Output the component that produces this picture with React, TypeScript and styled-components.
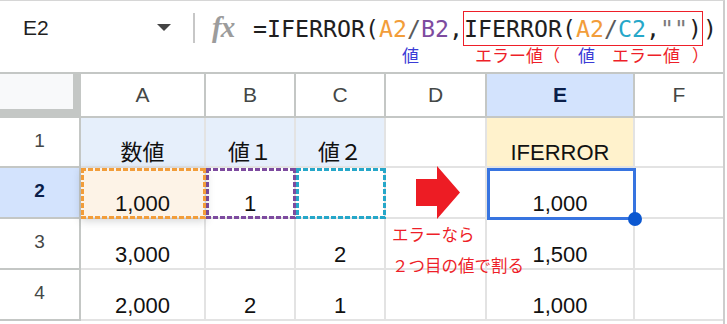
import React from "react";
import styled, { createGlobalStyle } from "styled-components";

const GlobalStyle = createGlobalStyle`
  html, body {
    margin: 0;
    padding: 0;
    background: #fff;
  }
  body {
    font-family: "Liberation Sans", "Noto Sans CJK JP", sans-serif;
  }
`;

const C = {
  ink: "#1f1f1f",
  orange: "#f29d3a",
  purple: "#7d4b9f",
  cyan: "#26a7c9",
  op: "#5a5a5a",
  quote: "#7a7a7a",
  red: "#ee1f29",
  blue: "#3b3bd6",
  head: "#c4c7c5",
  grid: "rgba(0, 0, 0, 0.11)",
  select: "#3774e0",
};

type Value = React.ReactNode;

const rows: { n: number; cells: Value[] }[] = [
  { n: 1, cells: ["数値", "値１", "値２", "", "IFERROR", ""] },
  { n: 2, cells: ["1,000", "1", "", "arrow", "1,000", ""] },
  { n: 3, cells: ["3,000", "", "2", "", "1,500", ""] },
  { n: 4, cells: ["2,000", "2", "1", "", "1,000", ""] },
];

const columns = ["A", "B", "C", "D", "E", "F"];

const cellBg: Record<string, string> = {
  A1: "#e6effb",
  B1: "#e6effb",
  C1: "#e6effb",
  E1: "#fff2cc",
  A2: "#fdf3e7",
};

const refs: Record<string, string> = {
  A2: C.orange,
  B2: C.purple,
  C2: C.cyan,
};

export default function App() {
  return (
    <>
      <GlobalStyle />
      <Frame>
        <FormulaBar>
          <TopRow>
            <NameBox>
              <span>E2</span>
              <svg width="14" height="7" viewBox="0 0 14 7">
                <polygon points="0,0 14,0 7,7" fill="#444" />
              </svg>
            </NameBox>
            <Divider />
            <Fx>fx</Fx>
            <Formula>
              <Tok $c={C.ink}>=IFERROR(</Tok>
              <Tok $c={C.orange}>A2</Tok>
              <Tok $c={C.op}>/</Tok>
              <Tok $c={C.purple}>B2</Tok>
              <Tok $c={C.ink}>,</Tok>
              <Boxed>
                <Tok $c={C.ink}>IFERROR(</Tok>
                <Tok $c={C.orange}>A2</Tok>
                <Tok $c={C.op}>/</Tok>
                <Tok $c={C.cyan}>C2</Tok>
                <Tok $c={C.ink}>,</Tok>
                <Tok $c={C.quote}>""</Tok>
                <Tok $c={C.ink}>)</Tok>
              </Boxed>
              <Tok $c={C.ink}>)</Tok>
            </Formula>
          </TopRow>
          <Legend>
            <Mark $c={C.blue}>値</Mark>
            <Mark $c={C.red} $gap={56}>エラー値（</Mark>
            <Mark $c={C.blue} $gap={18}>値</Mark>
            <Mark $c={C.red} $gap={17}>エラー値</Mark>
            <Mark $c={C.red} $gap={12}>）</Mark>
          </Legend>
        </FormulaBar>

        <Sheet>
          <Corner />
          {columns.map((c) => (
            <ColHead key={c} $active={c === "E"} $last={c === "F"}>
              {c}
            </ColHead>
          ))}
          {rows.map((r) => (
            <React.Fragment key={r.n}>
              <RowHead $active={r.n === 2}>{r.n}</RowHead>
              {r.cells.map((v, i) => {
                const id = columns[i] + r.n;
                return (
                  <Cell
                    key={id}
                    $bg={cellBg[id]}
                    $last={i === columns.length - 1}
                    $lift={id === "A2"}
                    $front={id === "E2"}
                    $center={v === "arrow"}
                  >
                    {v === "arrow" ? <Arrow /> : v}
                    {refs[id] && <RefRange $c={refs[id]} />}
                    {id === "E2" && (
                      <Selection>
                        <Handle />
                      </Selection>
                    )}
                  </Cell>
                );
              })}
            </React.Fragment>
          ))}
          <Note>
            <span>エラーなら</span>
            <span>２つ目の値で割る</span>
          </Note>
        </Sheet>
      </Frame>
    </>
  );
}

function Arrow() {
  return (
    <ArrowSvg width="44" height="53" viewBox="0 0 44 53">
      <polygon
        points="0,13 21,13 21,0 44,26.5 21,53 21,40 0,40"
        fill="#ed1c24"
      />
    </ArrowSvg>
  );
}

const Frame = styled.div`
  width: 725px;
  height: 324px;
  box-sizing: border-box;
  border-top: 1px solid #d6d6d6;
  border-right: 2px solid #cdcdcd;
  overflow: hidden;
  background: #fff;
`;

const FormulaBar = styled.div`
  position: relative;
  height: 71px;
`;

const TopRow = styled.div`
  display: flex;
  align-items: center;
  height: 53px;
  padding-left: 23px;
`;

const NameBox = styled.div`
  display: flex;
  align-items: center;
  justify-content: space-between;
  width: 148px;
  font-size: 21px;
  color: ${C.ink};

  svg {
    margin-top: -1px;
  }
`;

const Divider = styled.div`
  width: 2px;
  height: 30px;
  margin-left: 22px;
  background: #c7c7c7;
`;

const Fx = styled.div`
  width: 28px;
  margin-left: 17px;
  font-family: "Liberation Serif", serif;
  font-style: italic;
  font-weight: bold;
  font-size: 29px;
  line-height: 29px;
  color: #9c9c9c;
  letter-spacing: -1px;
`;

const Formula = styled.div`
  margin-left: 13px;
  padding-top: 3px;
  font-family: "DejaVu Sans Mono", "Liberation Mono", monospace;
  font-size: 23.25px;
  white-space: pre;
  line-height: 36px;
`;

const Tok = styled.span<{ $c: string }>`
  color: ${(p) => p.$c};
`;

const Boxed = styled.span`
  display: inline-block;
  border: 1.5px solid ${C.red};
  line-height: 33px;
`;

const Legend = styled.div`
  position: absolute;
  left: 402px;
  top: 45px;
  display: flex;
  font-family: "Noto Sans CJK JP", sans-serif;
  font-size: 17px;
  line-height: 17px;
`;

const Mark = styled.span<{ $c: string; $gap?: number }>`
  color: ${(p) => p.$c};
  margin-left: ${(p) => p.$gap ?? 0}px;
`;

const Sheet = styled.div`
  position: relative;
  display: grid;
  grid-template-columns: 81px 125px 90px 90px 101px 148px 88px;
  grid-template-rows: 46px 50px 51px 51px 51px;
`;

const Corner = styled.div`
  box-sizing: border-box;
  background: #f8f9fa;
  border-top: 2px solid ${C.head};
  border-right: 8px solid ${C.head};
  border-bottom: 9px solid ${C.head};
`;

const ColHead = styled.div<{ $active?: boolean; $last?: boolean }>`
  box-sizing: border-box;
  display: flex;
  align-items: center;
  justify-content: center;
  border-top: 2px solid ${C.head};
  border-bottom: 2px solid ${C.head};
  border-right: ${(p) => (p.$last ? "none" : `2px solid ${C.head}`)};
  background: ${(p) => (p.$active ? "#d3e3fd" : "#fff")};
  color: ${(p) => (p.$active ? "#0a1f4a" : "#444746")};
  font-weight: ${(p) => (p.$active ? "bold" : "normal")};
  font-size: 21px;
`;

const RowHead = styled.div<{ $active?: boolean }>`
  box-sizing: border-box;
  display: flex;
  align-items: center;
  justify-content: center;
  border-right: 2px solid ${C.head};
  border-bottom: 2px solid ${C.head};
  background: ${(p) => (p.$active ? "#d3e3fd" : "#fff")};
  color: ${(p) => (p.$active ? "#0a1f4a" : "#444746")};
  font-weight: ${(p) => (p.$active ? "bold" : "normal")};
  font-size: 19px;
  padding-bottom: 3px;
`;

const Cell = styled.div<{
  $bg?: string;
  $last?: boolean;
  $lift?: boolean;
  $front?: boolean;
  $center?: boolean;
}>`
  position: relative;
  box-sizing: border-box;
  display: flex;
  align-items: ${(p) => (p.$center ? "center" : "flex-end")};
  justify-content: center;
  padding-bottom: ${(p) => (p.$center ? 0 : 1)}px;
  border-bottom: 2px solid ${C.grid};
  border-right: ${(p) => (p.$last ? "none" : `2px solid ${C.grid}`)};
  background: ${(p) => p.$bg ?? "#fff"};
  background-clip: padding-box;
  font-size: 22px;
  line-height: 24px;
  color: #111;
  z-index: ${(p) => (p.$front ? 2 : p.$lift ? 1 : "auto")};
  box-shadow: ${(p) => (p.$lift ? "0 2px 8px rgba(60, 64, 67, 0.22)" : "none")};
`;

const RefRange = styled.div<{ $c: string }>`
  position: absolute;
  top: 0;
  left: 0;
  right: -2px;
  bottom: -2px;
  pointer-events: none;
  background:
    repeating-linear-gradient(90deg, ${(p) => p.$c} 0 5px, transparent 5px 7px) top left / 100% 3px no-repeat,
    repeating-linear-gradient(90deg, ${(p) => p.$c} 0 5px, transparent 5px 7px) bottom left / 100% 3px no-repeat,
    repeating-linear-gradient(180deg, ${(p) => p.$c} 0 5px, transparent 5px 7px) top left / 3px 100% no-repeat,
    repeating-linear-gradient(180deg, ${(p) => p.$c} 0 5px, transparent 5px 7px) top right / 3px 100% no-repeat;
`;

const Selection = styled.div`
  position: absolute;
  top: 0;
  left: 0;
  right: -3px;
  bottom: -3px;
  border: 3px solid ${C.select};
`;

const Handle = styled.div`
  position: absolute;
  right: -9px;
  bottom: -9px;
  width: 14px;
  height: 14px;
  border-radius: 50%;
  background: #0b57d0;
`;

const ArrowSvg = styled.svg`
  flex: none;
  margin-left: 5px;
`;

const Note = styled.div`
  position: absolute;
  left: 392px;
  top: 147px;
  z-index: 3;
  display: flex;
  flex-direction: column;
  font-family: "Noto Sans CJK JP", sans-serif;
  font-size: 16.5px;
  line-height: 31px;
  color: ${C.red};
  white-space: nowrap;
`;
